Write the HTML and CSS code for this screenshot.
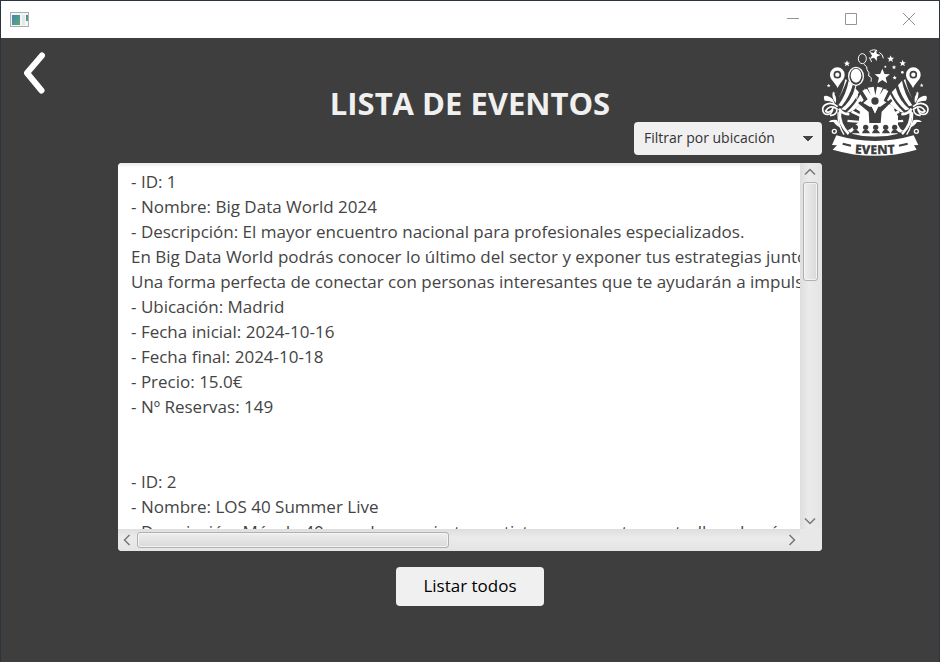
FILE: index.html
```html
<!DOCTYPE html>
<html lang="es">
<head>
<meta charset="utf-8">
<title>Lista de eventos</title>
<link rel="stylesheet" href="styles.css">
</head>
<body>
<div class="window">
  <header class="titlebar">
    <svg class="app-icon" viewBox="0 0 20 16" aria-hidden="true">
      <defs><linearGradient id="screen" x1="0" y1="0" x2="1" y2="1"><stop offset="0" stop-color="#4a82b4"/><stop offset="1" stop-color="#55ad70"/></linearGradient></defs>
      <rect x=".5" y=".5" width="18" height="14" fill="#f4f5f6" stroke="#a9aeb3"/>
      <rect x="2" y="3" width="8" height="10" fill="url(#screen)"/>
      <rect x="12" y="3" width="3" height="10" fill="#e4e6e8"/>
      <rect x="16" y="3" width="2" height="6" fill="url(#screen)"/>
    </svg>
    <div class="window-controls">
      <button type="button" aria-label="Minimizar"><svg viewBox="0 0 12 12"><path d="M0 5.500H12"/></svg></button>
      <button type="button" aria-label="Maximizar"><svg viewBox="0 0 12 12"><path d="M.5.5h11v11H.5z"/></svg></button>
      <button type="button" aria-label="Cerrar"><svg viewBox="0 0 12 12"><path d="M0 0L12 12M12 0L0 12"/></svg></button>
    </div>
  </header>
  <main class="page">
    <button type="button" class="back" aria-label="Volver"><svg viewBox="0 0 22 42"><path d="M19 3.500L4 21L18.500 38.500"/></svg></button>
    <section class="content">
      <h1>LISTA DE EVENTOS</h1>
      <select class="filter" aria-label="Filtrar por ubicación"><option>Filtrar por ubicación</option></select>
      <div class="viewer">
        <textarea class="events" wrap="off" readonly aria-label="Eventos">- ID: 1
- Nombre: Big Data World 2024
- Descripción: El mayor encuentro nacional para profesionales especializados.
En Big Data World podrás conocer lo último del sector y exponer tus estrategias junto a
Una forma perfecta de conectar con personas interesantes que te ayudarán a impulsar
- Ubicación: Madrid
- Fecha inicial: 2024-10-16
- Fecha final: 2024-10-18
- Precio: 15.0€
- Nº Reservas: 149


- ID: 2
- Nombre: LOS 40 Summer Live
- Descripción: Más de 40 grandes conciertos, artistas y encuentros estrella, además, música</textarea>
        <div class="scroll vertical">
          <svg viewBox="0 0 12 8"><path d="M1 6.500L6 1.500L11 6.500"/></svg>
          <div class="track"><div class="thumb"></div></div>
          <svg viewBox="0 0 12 8"><path d="M1 1.500L6 6.500L11 1.500"/></svg>
        </div>
        <div class="scroll horizontal">
          <svg viewBox="0 0 8 12"><path d="M6.500 1L1.500 6L6.500 11"/></svg>
          <div class="track"><div class="thumb"></div></div>
          <svg viewBox="0 0 8 12"><path d="M1.500 1L6.500 6L1.500 11"/></svg>
        </div>
        <div class="corner"></div>
      </div>
      <button type="button" class="list-all">Listar todos</button>
    </section>
    <svg class="logo" viewBox="0 0 360 360" role="img" aria-label="Event">
      <defs>
        <path id="star" d="M0-10L2.700-3.300L9.500-3.100L4.200 1.300L6 8.100L0 4.300L-6 8.100L-4.200 1.300L-9.500-3.100L-2.700-3.300Z"/>
        <path id="banner-line" d="M50 327Q180 347 310 327"/>
        <g id="side">
          <path d="M68 138C58 118 45 113 45 98A22 22 0 0 1 89 98C89 113 77 118 68 138Z" fill="#fff"/>
          <circle cx="67" cy="98" r="9" fill="#fff" stroke="#3e3e3e" stroke-width="5"/>
          <path d="M101 116Q94 157 70 190L80 193Q103 165 113 130Z" fill="#fff"/>
          <path d="M91 112Q84 145 70 170Q82 151 96 114Z" fill="#fff"/>
          <path d="M120 138Q110 176 78 202L91 205Q119 180 132 151Z" fill="#fff"/>
          <path d="M136 157Q122 187 94 212Q116 213 146 174Z" fill="#fff"/>
          <path d="M72 200Q83 218 103 216M75 208Q70 244 101 276" fill="none" stroke="#fff" stroke-width="8"/>
          <path d="M69 211Q68 250 87 278" fill="none" stroke="#fff" stroke-width="4"/>
          <path d="M60 190Q57 176 29 176Q20 155 43 164Q57 169 60 190ZM62 184Q48 164 54 154Q67 162 62 184Z" fill="#fff"/>
          <path d="M68 194C45 175 24 188 23 202C23 224 53 221 53 201C48 210 36 214 32 207C39 195 50 189 66 201C66 214 58 221 45 220" fill="none" stroke="#fff" stroke-width="5"/>
          <path d="M41 240Q47 231 66 234L80 260Q61 249 56 240Z" fill="#fff"/>
          <circle cx="58" cy="268" r="6" fill="none" stroke="#fff" stroke-width="4"/>
          <path d="M98 233L139 237V243L97 240ZM112 205L145 222L143 228L108 212ZM136 187L153 205L146 216L122 200ZM98 265L141 248V256L106 272ZM147 139L169 160L159 171Z" fill="#fff"/>
        </g>
      </defs>
      <use href="#side"/><use href="#side" transform="translate(362 0) scale(-1 1)"/>
      <path d="M142 146L156 140L169 163L158 137L176 134L181 160L186 134L203 137L193 162L206 140L220 147L206 176L229 190L249 222V248L259 265L248 270V284H112V270L101 265L131 241L137 190L158 172Z" fill="#fff"/>
      <g fill="#3e3e3e">
        <path d="M129 183L136 178L164 194H170L180 213L190 194H196L228 171L232 177L200 209L197 243H163L161 210Z"/>
        <circle cx="180" cy="177" r="11"/>
        <path d="M102 274Q180 295 258 274V287H102Z"/>
        <g id="crowd"><circle cx="121" cy="256" r="8"/><path d="M110 274Q113 262 121 263Q129 262 134 274Z"/></g>
        <use href="#crowd" x="31"/><use href="#crowd" x="61"/><use href="#crowd" x="91"/><use href="#crowd" x="118"/>
      </g>
      <path d="M171 194H177L180 198L183 194H189L180 215Z" fill="#fff"/>
      <g fill="#fff">
        <path d="M64 280Q180 314 296 280L310 309L297 310L305 323Q180 360 53 323L66 310L51 309Z"/>
        <use href="#star" transform="translate(202 104) scale(2.400)"/><use href="#star" transform="translate(179 40) rotate(15) scale(1.800)"/>
        <use href="#star" transform="translate(96 65)"/><use href="#star" transform="translate(227 51) scale(1.100)"/><use href="#star" transform="translate(263 64) scale(1.050)"/>
        <use href="#star" transform="translate(237 76) scale(.7)"/><use href="#star" transform="translate(239 107) scale(.7)"/><use href="#star" transform="translate(41 131) scale(.6)"/><use href="#star" transform="translate(320 130) scale(.6)"/><use href="#star" transform="translate(56 154) scale(.6)"/><use href="#star" transform="translate(307 154) scale(.6)"/><circle cx="262" cy="91" r="4"/><circle cx="211" cy="74" r="3"/>
      </g>
      <g fill="none" stroke="#fff" stroke-width="3">
        <ellipse cx="142" cy="50" rx="12" ry="15"/><path d="M146 66Q159 74 156 83Q165 92 161 102Q172 104 168 119M163 29Q176 19 187 27M193 31Q204 37 205 49M163 46L170 60"/>
      </g>
      <ellipse cx="123" cy="103" rx="22" ry="27" fill="#3e3e3e" stroke="#fff" stroke-width="4"/>
      <ellipse cx="123" cy="101" rx="16" ry="21" fill="#fff"/>
      <path d="M123 130Q116 150 128 158Q121 168 130 180" fill="none" stroke="#fff" stroke-width="3"/>
      <path d="M83 305L108 311M252 311L278 305" stroke="#3e3e3e" stroke-width="6"/>
      <text class="logo-text"><textPath href="#banner-line" startOffset="50%" text-anchor="middle">EVENT</textPath></text>
    </svg>
  </main>
</div>
</body>
</html>
```
FILE: styles.css
```css
* { box-sizing: border-box; }
body { margin: 0; background: #3e3e3e; font-family: "Open Sans", "Noto Sans", sans-serif; }
button { border: 0; padding: 0; font: inherit; }
svg { display: block; }
.window { min-height: 100vh; display: flex; flex-direction: column; border: 1px solid #2c3440; border-bottom-color: #383838; }
.titlebar { height: 37px; padding: 0 1px 0 9px; background: #fff; display: flex; align-items: center; justify-content: space-between; }
.app-icon { width: 20px; height: 16px; }
.window-controls { display: flex; align-self: stretch; }
.window-controls button { width: 58px; padding-bottom: 1px; display: grid; place-items: center; background: none; }
.window-controls svg { width: 12px; height: 12px; fill: none; stroke: #949494; }
.page { flex: 1; display: grid; grid-template-columns: 117px minmax(0, 1fr) 117px; align-items: start; }
.back { margin: 14px 0 0 22px; width: 22px; background: none; }
.back svg { width: 22px; height: 42px; fill: none; stroke: #fff; stroke-width: 6; stroke-linecap: round; stroke-linejoin: round; }
.logo { width: 120px; height: 120px; margin: 4px 0 0 -7px; }
.logo-text { font: 800 38px "Open Sans", sans-serif; fill: #3e3e3e; }
.content { padding: 47px 0 56px; display: flex; flex-direction: column; align-items: center; }
h1 { margin: 0; font-size: 31px; line-height: 36px; color: #f0f0f0; }
.filter { align-self: flex-end; width: 188px; height: 33px; margin-top: 1px; padding: 0 10px 2px; border: 0; border-radius: 4px; appearance: none; font: inherit; font-size: 14px; color: #333; background: #f0f0f0; }
.filter { background-image: linear-gradient(to bottom right, #444 50%, transparent 51%), linear-gradient(to bottom left, #444 50%, transparent 51%); background-size: 5px 5px; background-position: 174px 14px, 169px 14px; background-repeat: no-repeat; }
.viewer { width: 100%; margin: 8px 0 16px; display: grid; grid-template: 366px 22px / minmax(0, 1fr) 22px; border-radius: 4px; overflow: hidden; background: #fff; }
.events { border: 0; margin: 0; padding: 6px 4px 0 13px; resize: none; overflow: hidden; outline: 0; font: inherit; font-size: 17px; line-height: 25px; color: #444; background: linear-gradient(#ececec, #fff 5px); }
.scroll { display: flex; align-items: center; }
.scroll svg { fill: none; stroke: #777; stroke-width: 1.500; flex: none; }
.track { flex: 1; }
.thumb { border: 1px solid #b0b0b0; border-radius: 3px; box-shadow: inset 0 0 0 1px #f4f4f4; }
.vertical { flex-direction: column; padding: 5px 2px 4px 0; background: linear-gradient(90deg, #dedede, #ebebeb 40%, #e4e4e4); }
.vertical svg { width: 12px; height: 8px; }
.vertical .track { padding-top: 6px; }
.vertical .thumb { width: 15px; height: 99px; background: linear-gradient(90deg, #eee, #d9d9d9); }
.horizontal { padding: 0 4px 1px 5px; background: linear-gradient(#dedede, #ebebeb 40%, #e4e4e4); }
.horizontal svg { width: 8px; height: 12px; }
.horizontal .track { padding-left: 6px; }
.horizontal .thumb { width: 48%; height: 16px; background: linear-gradient(#eee, #d9d9d9); }
.corner { background: #e8e8e8; }
.list-all { width: 148px; height: 39px; padding-bottom: 2px; border-radius: 4px; background: #f0f0f0; color: #000; font-size: 17px; }
```
